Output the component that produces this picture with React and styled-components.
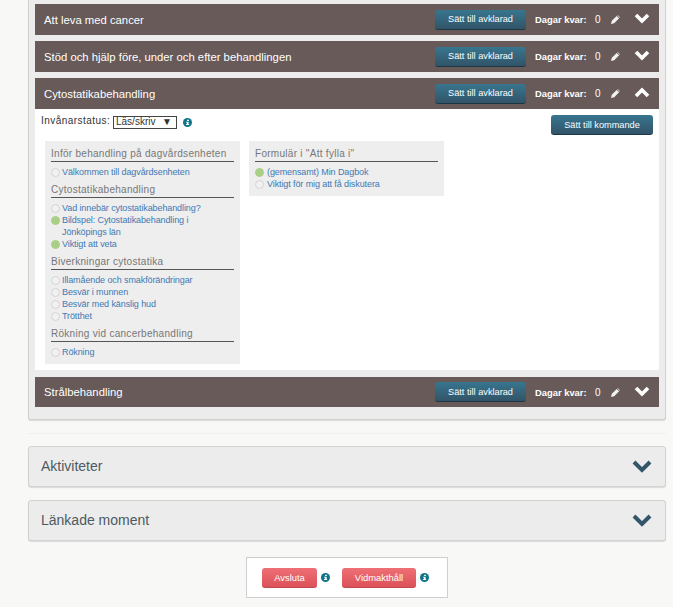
import React from "react";
import styled, { createGlobalStyle } from "styled-components";

const Global = createGlobalStyle`
  html, body { margin: 0; padding: 0; background: #f8f8f7; }
  body { font-family: "Liberation Sans", Arial, sans-serif; overflow: hidden; }
`;
const Page = styled.div`
  width: 673px;
  height: 607px;
  overflow: hidden;
  padding: 0 7px 0 28px;
  box-sizing: border-box;
`;
const MainPanel = styled.div`
  background: #ececec;
  border: 1px solid #d2d2d2;
  border-top: 0;
  border-radius: 0 0 3px 3px;
  box-shadow: 0 1px 1px rgba(0,0,0,.12);
  padding: 4px 6px 12px;
  display: flex;
  flex-direction: column;
`;
const Row = styled.div`
  height: ${p => p.$h || 31}px;
  background: #675a58;
  margin-bottom: ${p => p.$mb ?? 6}px;
  display: flex;
  align-items: center;
  padding: 0 9px 0 9px;
  color: #fff;
`;
const RowTitle = styled.div`
  flex: 1;
  font-size: 11.3px;
  white-space: nowrap;
`;
const DarkButton = styled.button`
  flex: none;
  height: 20px;
  width: ${p => p.$w}px;
  padding: 0;
  border: 0;
  border-bottom: 1px solid #1d3644;
  border-radius: 3px;
  background: linear-gradient(#37768f, #325468);
  color: #fff;
  font: 9.2px "Liberation Sans", Arial, sans-serif;
`;
const DaysLabel = styled.span`
  flex: none;
  font-size: 9.4px;
  font-weight: bold;
  margin-left: 9px;
  width: 60px;
  white-space: nowrap;
`;
const DaysValue = styled.span`
  flex: none;
  font-size: 10px;
  width: 16px;
`;
const PencilBox = styled.svg`
  flex: none;
  width: 9px;
  height: 9px;
  margin-right: 14px;
`;
const Chevron = styled.svg`
  flex: none;
  width: ${p => p.$w}px;
  height: ${p => p.$h}px;
  display: block;
  position: relative;
  top: ${p => p.$top}px;
`;
const Content = styled.div`
  background: #fff;
  height: 261px;
  margin: -6px 0 7px;
  box-sizing: border-box;
  padding: 6px;
`;
const ContentTop = styled.div`
  display: flex;
  align-items: flex-start;
  height: 20px;
`;
const StatusLabel = styled.span`
  font-size: 10px;
  line-height: 12px;
  color: #333;
  letter-spacing: .45px;
  width: 72px;
  white-space: nowrap;
`;
const FakeSelect = styled.span`
  box-sizing: border-box;
  width: 64px;
  height: 13px;
  margin-top: 1px;
  border: 1px solid #444;
  margin-right: 6px;
  font-size: 10px;
  color: #333;
  display: flex;
  justify-content: space-between;
  padding: 0 4px 0 2px;
  line-height: 10px;
`;
const RightButton = styled(DarkButton)`
  margin-left: auto;
`;
const Columns = styled.div`
  display: flex;
  align-items: flex-start;
  gap: 9px;
  margin: 6px 0 0 4px;
`;
const Card = styled.div`
  width: 195px;
  background: #eeeeee;
  box-sizing: border-box;
  padding: 3px 6px 6px;
`;
const Heading = styled.div`
  font-size: 10px;
  line-height: 14px;
  letter-spacing: .28px;
  color: #777;
  border-bottom: 1px solid #555;
  padding-top: 2.5px;
  padding-bottom: .5px;
  margin-bottom: 3.5px;
`;
const Group = styled.div`
  margin-bottom: 2.5px;
  &:last-child { margin-bottom: 0; }
`;
const Item = styled.div`
  display: flex;
  font-size: 9px;
  letter-spacing: -.1px;
  line-height: 12px;
  color: #3f79b2;
`;
const Dot = styled.span`
  flex: none;
  width: 9px;
  height: 9px;
  border-radius: 50%;
  margin: 2px ${p => p.$gap}px 0 0;
  box-sizing: border-box;
  background: ${p => (p.$on ? "#a8cf85" : "#f1f1f1")};
  border: 1px solid ${p => (p.$on ? "#a8cf85" : "#d4d4d4")};
`;
const Divider = styled.div`
  height: 1px;
  background: #f0f0ef;
  margin: 13px 0 12px;
`;
const Accordion = styled.div`
  box-sizing: border-box;
  height: 41px;
  background: #ececec;
  border: 1px solid #d2d2d2;
  border-radius: 3px;
  box-shadow: 0 1px 1px rgba(0,0,0,.12);
  margin-bottom: 13px;
  display: flex;
  align-items: center;
  justify-content: space-between;
  padding: 0 13px 2px 12px;
  font-size: 14px;
  color: #4d5a62;
`;
const FooterWrap = styled.div`
  display: flex;
  justify-content: center;
  padding-top: 3px;
`;
const Footer = styled.div`
  box-sizing: border-box;
  width: 202px;
  height: 41px;
  background: #fff;
  border: 1px solid #cfcfcf;
  display: flex;
  align-items: center;
  padding-left: 15px;
`;
const RedButton = styled.button`
  flex: none;
  width: ${p => p.$w}px;
  height: 20px;
  padding: 0;
  margin-left: ${p => p.$ml || 0}px;
  border: 0;
  border-bottom: 1px solid #c14a50;
  border-radius: 3px;
  background: linear-gradient(#ee6f75, #dc5259);
  color: #fff;
  font: 9.4px "Liberation Sans", Arial, sans-serif;
`;
const InfoSvg = styled.svg`
  width: 9px;
  height: 9px;
  flex: none;
  margin: ${p => p.$m || "0"};
`;

const Info = ({ m }) => (
  <InfoSvg $m={m} viewBox="0 0 10 10">
    <circle cx="5" cy="5" r="5" fill="#0f7589" />
    <path d="M4.6 2h2v1.4h-2zM3.6 4.3h2.6v2.4h.6v1.2H3.4V6.7h.9V5.4h-.7z" fill="#fff" />
  </InfoSvg>
);
const Pencil = () => (
  <PencilBox viewBox="0 0 10 10">
    <path d="M0 10l.9-3.6 5.4-5.4 2.7 2.7-5.4 5.4zM7 .4l.5-.4 2.5 2.5-.4.5z" fill="#f2f2f2" />
  </PencilBox>
);
const Chev = ({ up, color = "#fff", w = 16, h = 11, top = -1 }) => (
  <Chevron $w={w} $h={h} $top={top} viewBox={`0 0 ${w} ${h}`}>
    <path
      d={up ? `M2 ${h - 2}L${w / 2} ${h - 2 - (w / 2 - 2)}L${w - 2} ${h - 2}` : `M2 2L${w / 2} ${w / 2}L${w - 2} 2`}
      fill="none"
      stroke={color}
      strokeWidth={w > 16 ? 4 : 3.6}
    />
  </Chevron>
);

const Header = ({ title, open, h, mb }) => (
  <Row $h={h} $mb={mb}>
    <RowTitle>{title}</RowTitle>
    <DarkButton $w={91}>Sätt till avklarad</DarkButton>
    <DaysLabel>Dagar kvar:</DaysLabel>
    <DaysValue>0</DaysValue>
    <Pencil />
    <Chev up={open} />
  </Row>
);
const Section = ({ title, items, gap = 2 }) => (
  <Group>
    <Heading>{title}</Heading>
    {items.map(([t, on]) => (
      <Item key={t}><Dot $on={on} $gap={gap} /><span>{t}</span></Item>
    ))}
  </Group>
);

export default function App() {
  return (
    <Page>
      <Global />
      <MainPanel>
        <Header title="Att leva med cancer" />
        <Header title="Stöd och hjälp före, under och efter behandlingen" />
        <Header title="Cytostatikabehandling" open />
        <Content>
          <ContentTop>
            <StatusLabel>Invånarstatus:</StatusLabel>
            <FakeSelect><span>Läs/skriv</span><span>▼</span></FakeSelect>
            <Info m="3px 0 0" />
            <RightButton $w={102}>Sätt till kommande</RightButton>
          </ContentTop>
          <Columns>
            <Card>
              <Section title="Inför behandling på dagvårdsenheten" items={[["Välkommen till dagvårdsenheten"]]} />
              <Section title="Cytostatikabehandling" items={[
                ["Vad innebär cytostatikabehandling?"],
                ["Bildspel: Cytostatikabehandling i Jönköpings län", true],
                ["Viktigt att veta", true],
              ]} />
              <Section title="Biverkningar cytostatika" items={[
                ["Illamående och smakförändringar"],
                ["Besvär i munnen"],
                ["Besvär med känslig hud"],
                ["Trötthet"],
              ]} />
              <Section title="Rökning vid cancerbehandling" items={[["Rökning"]]} />
            </Card>
            <Card>
              <Section gap={3} title={'Formulär i "Att fylla i"'} items={[
                ["(gemensamt) Min Dagbok", true],
                ["Viktigt för mig att få diskutera"],
              ]} />
            </Card>
          </Columns>
        </Content>
        <Header title="Strålbehandling" h={30} mb={0} />
      </MainPanel>
      <Divider />
      <Accordion>Aktiviteter<Chev color="#33566b" w={20} h={13} top={1} /></Accordion>
      <Accordion>Länkade moment<Chev color="#33566b" w={20} h={13} top={1} /></Accordion>
      <FooterWrap>
        <Footer>
          <RedButton $w={55}>Avsluta</RedButton>
          <Info m="0 0 0 4px" />
          <RedButton $w={74} $ml={12}>Vidmakthåll</RedButton>
          <Info m="0 0 0 4px" />
        </Footer>
      </FooterWrap>
    </Page>
  );
}
